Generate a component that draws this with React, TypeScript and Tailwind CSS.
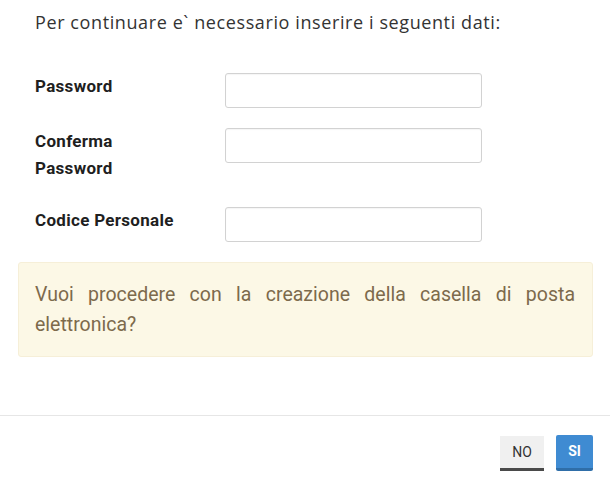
const FIELDS = [
  { label: ["Password"], gap: "mb-[20px]" },
  { label: ["Conferma", "Password"], gap: "mb-[25px]" },
  { label: ["Codice Personale"], gap: "" },
];

function Field({ label, gap }: { label: string[]; gap: string }) {
  return (
    <div className={`flex items-start ${gap}`}>
      <label className="w-[190px] text-[17px] font-bold leading-[27px] tracking-[0.3px] text-[#1f1f1f]">
        {label.map((l) => (
          <div key={l}>{l}</div>
        ))}
      </label>
      <input
        type="password"
        className="h-[35px] w-[257px] rounded-[3px] border border-[#d2d2d2] bg-white px-2 text-[15px] outline-none shadow-[inset_0_1px_1px_rgba(0,0,0,0.04)]"
      />
    </div>
  );
}

export default function App() {
  return (
    <div
      className="h-[479px] w-[610px] overflow-hidden bg-white"
      style={{ fontFamily: "Roboto, 'Liberation Sans', sans-serif" }}
    >
      <p
        className="px-[35px] pt-[9px] text-[18px] leading-[26px] tracking-[0.6px] text-[#333333]"
        style={{ fontFamily: "'Open Sans', Roboto, sans-serif" }}
      >
        Per continuare e` necessario inserire i seguenti dati:
      </p>

      <form className="mt-[38px] px-[35px]">
        {FIELDS.map((f) => (
          <Field key={f.label.join(" ")} label={f.label} gap={f.gap} />
        ))}
      </form>

      <div className="ml-[18px] mr-[17px] mt-[20px] rounded-[3px] border border-[#f6efd8] bg-[#fcf8e6] pb-[16px] pl-[16px] pr-[17px] pt-[17px] text-justify text-[19.5px] leading-[30px] text-[#7d6a4c]">
        Vuoi procedere con la creazione della casella di posta elettronica?
      </div>

      <div className="mt-[58px] border-t border-[#e6e6e6]">
        <div className="flex justify-end gap-[12px] pr-[17px] pt-[20px]">
          <button className="h-[35px] w-[44px] border-b-[3px] border-[#4a4a4a] bg-[#f0f0f0] text-[14px] text-[#333333]">
            NO
          </button>
          <button className="-mt-[1px] h-[36px] w-[37px] rounded-[2px] border-b-[3px] border-[#2f6ea8] bg-[#3f8bd2] text-[14px] font-bold text-white">
            SI
          </button>
        </div>
      </div>
    </div>
  );
}
